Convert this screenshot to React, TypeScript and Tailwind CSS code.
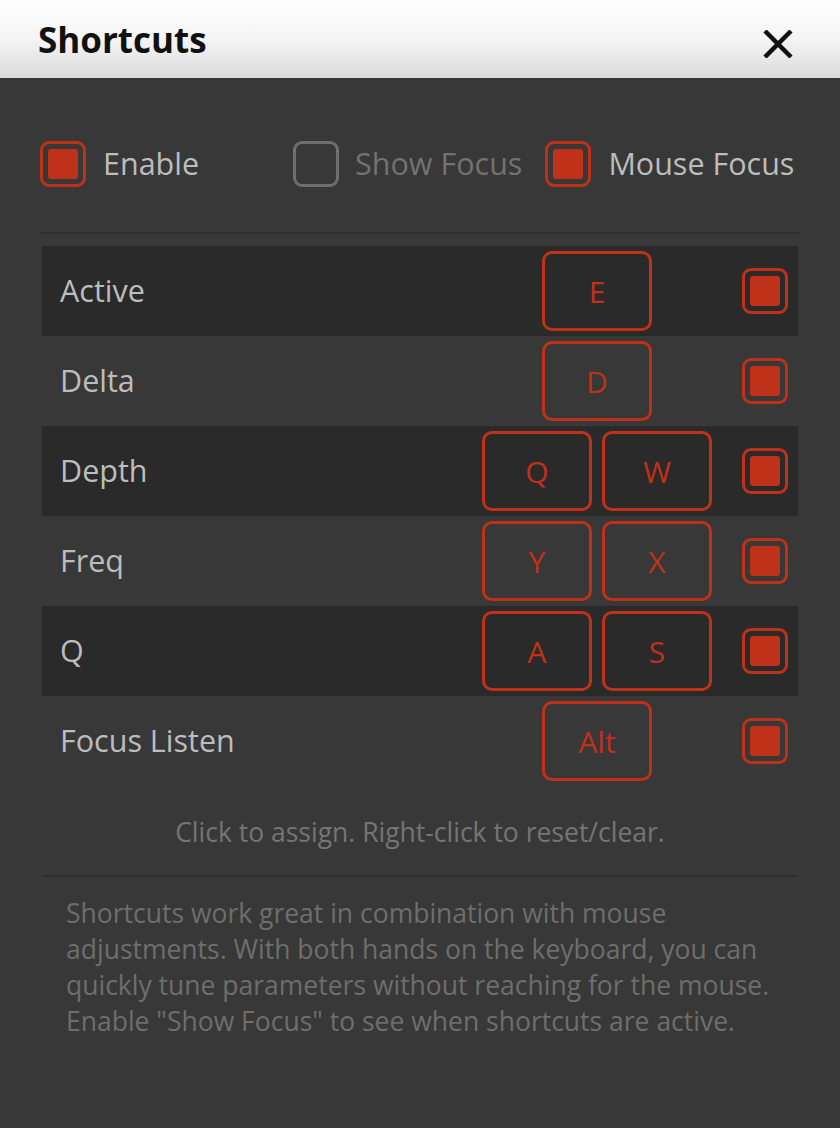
import React from "react";

const RED = "border-[#c0311a]";

function Check({ on = true, muted = false }: { on?: boolean; muted?: boolean }) {
  return (
    <div
      className={`w-[46px] h-[46px] shrink-0 rounded-[9px] border-[3px] p-[5px] ${
        muted ? "border-[#6f6f6d]" : RED
      }`}
    >
      {on && <div className="w-full h-full rounded-[3px] bg-[#c0311a]" />}
    </div>
  );
}

function Key({ k }: { k: string }) {
  return (
    <div
      className={`w-[110px] h-[80px] rounded-[10px] border-[3px] ${RED} flex items-center justify-center text-[30px] text-[#c0311a]`}
    >
      {k}
    </div>
  );
}

const rows: { name: string; keys: string[] }[] = [
  { name: "Active", keys: ["E"] },
  { name: "Delta", keys: ["D"] },
  { name: "Depth", keys: ["Q", "W"] },
  { name: "Freq", keys: ["Y", "X"] },
  { name: "Q", keys: ["A", "S"] },
  { name: "Focus Listen", keys: ["Alt"] },
];

export default function App() {
  return (
    <div
      className="w-[840px] h-[1128px] bg-[#383838] flex flex-col"
      style={{ fontFamily: '"Open Sans", "Noto Sans", sans-serif' }}
    >
      <header className="h-[78px] shrink-0 flex items-center justify-between pl-[38px] pr-[47px] bg-gradient-to-b from-white via-[#f4f4f4] to-[#dcdcdc]">
        <h1 className="text-[35px] font-bold text-[#111] leading-none">Shortcuts</h1>
        <svg width="30" height="28" viewBox="0 0 30 28" className="mt-[10px]">
          <path d="M2 1 L28 27 M28 1 L2 27" stroke="#111" strokeWidth="4.5" strokeLinecap="butt" />
        </svg>
      </header>

      <div className="px-[42px]">
        <div className="flex items-center h-[156px] pt-[18px] border-b-2 border-[#2f2f2f] -mx-[2px] whitespace-nowrap">
          <Check />
          <span className="ml-[17px] text-[30.5px] text-[#bdbdbd]">Enable</span>
          <div className="ml-[94px] flex items-center shrink-0">
            <Check on={false} muted />
            <span className="ml-[16px] text-[30.5px] text-[#727270]">Show Focus</span>
          </div>
          <div className="ml-[23px] flex items-center shrink-0">
            <Check />
            <span className="ml-[17px] text-[30.5px] text-[#bdbdbd]">Mouse Focus</span>
          </div>
        </div>

        <div className="mt-[12px]">
          {rows.map((r, i) => (
            <div
              key={r.name}
              className={`h-[90px] flex items-center pl-[18px] pr-[10px] ${
                i % 2 === 0 ? "bg-[#2a2a2a]" : ""
              }`}
            >
              <span className="flex-1 text-[30.5px] text-[#bdbdbd]">{r.name}</span>
              <div className="w-[230px] flex justify-center gap-[10px]">
                {r.keys.map((k) => (
                  <Key key={k} k={k} />
                ))}
              </div>
              <div className="ml-[30px]">
                <Check />
              </div>
            </div>
          ))}
        </div>

        <div className="mt-[29px] pb-[26px] border-b-2 border-[#2f2f2f]">
          <p className="text-center text-[26.5px] leading-[34px] text-[#757573]">
            Click to assign. Right-click to reset/clear.
          </p>
        </div>

        <p className="mt-[18px] px-[24px] text-[26.5px] leading-[36px] text-[#6e6e6c]">
          Shortcuts work great in combination with mouse adjustments. With both hands on the keyboard, you can
          quickly tune parameters without reaching for the mouse. Enable "Show Focus" to see when shortcuts are
          active.
        </p>
      </div>
    </div>
  );
}
